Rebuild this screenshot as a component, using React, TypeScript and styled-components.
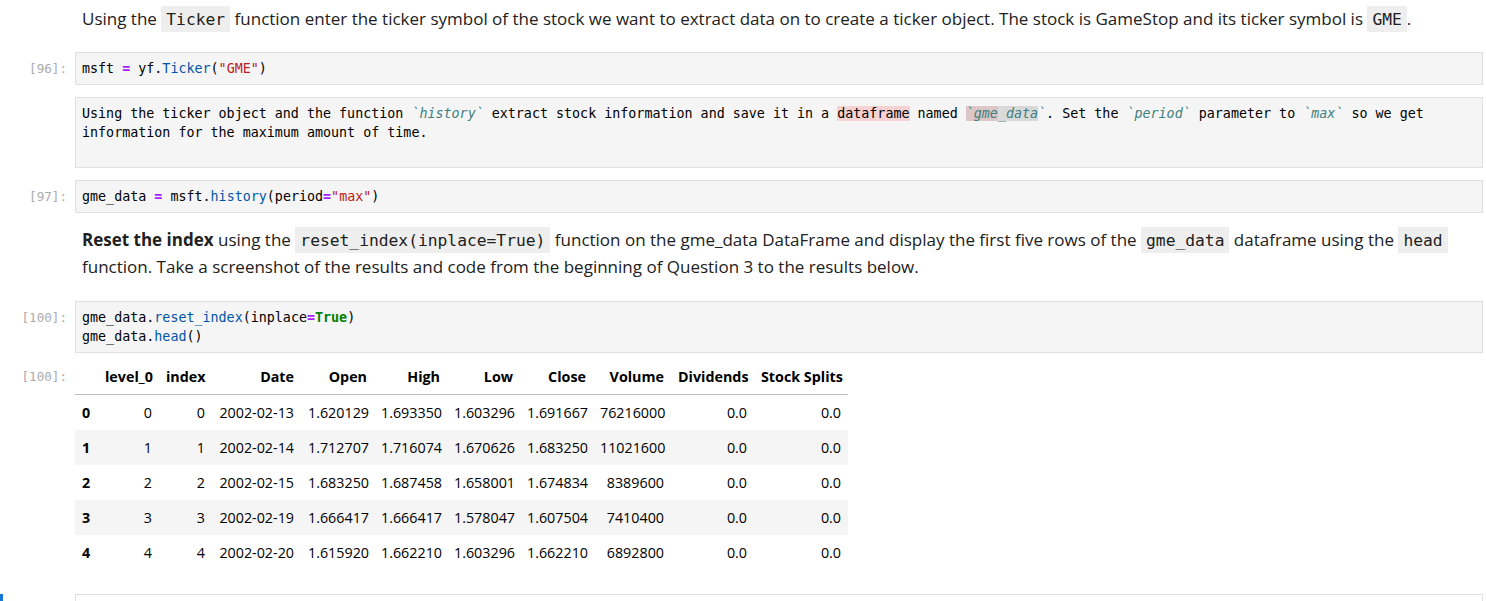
import React from "react";
import styled, { createGlobalStyle } from "styled-components";

const GlobalStyle = createGlobalStyle`
  html, body { margin: 0; padding: 0; background: #ffffff; }
  body { font-family: "Open Sans", "Noto Sans", sans-serif; color: #212121; }
`;

const Notebook = styled.div`
  display: flex;
  flex-direction: column;
  width: 1483px;
`;

const Cell = styled.div<{ $pt: number; $pb: number }>`
  display: flex;
  align-items: flex-start;
  padding: ${(p) => p.$pt}px 0 ${(p) => p.$pb}px;
`;

const Collapser = styled.div<{ $active?: boolean }>`
  width: 3px;
  align-self: stretch;
  flex: none;
  background: ${(p) => (p.$active ? "#1976d2" : "transparent")};
`;

const Prompt = styled.div<{ $top: number }>`
  width: 72px;
  flex: none;
  box-sizing: border-box;
  padding: ${(p) => p.$top}px 8px 0 0;
  text-align: right;
  font-family: "DejaVu Sans Mono", "Liberation Mono", monospace;
  font-size: 12.6px;
  line-height: 19px;
  color: #ababab;
`;

const Body = styled.div`
  flex: 1;
  min-width: 0;
`;

const Editor = styled.div<{ $white?: boolean }>`
  border: 1px solid #e0e0e0;
  background: ${(p) => (p.$white ? "#ffffff" : "#f5f5f5")};
  padding: 6px 6px;
  font-family: "DejaVu Sans Mono", "Liberation Mono", monospace;
  font-size: 13.35px;
  line-height: 19px;
  color: #000;
  white-space: pre;
`;

const Line = styled.div`
  height: 19px;
`;

const Tok = styled.span<{ $k: "op" | "str" | "prop" | "kw" }>`
  color: ${(p) =>
    p.$k === "op" ? "#aa22ff" : p.$k === "str" ? "#ba2121" : p.$k === "prop" ? "#0055aa" : "#008000"};
  font-weight: ${(p) => (p.$k === "op" || p.$k === "kw" ? 700 : 400)};
`;

const Tick = styled.span`
  color: #408080;
  font-style: italic;
`;

const Mark = styled.span<{ $tone: "spell" | "sel" | "mix" }>`
  background: ${(p) => (p.$tone === "spell" ? "#f6d2d2" : p.$tone === "mix" ? "#dcc6c6" : "#d9d9d9")};
`;

const Markdown = styled.div`
  padding: 0 7px;
  font-size: 17px;
  line-height: 27px;
  color: #212121;
`;

const Strong = styled.strong`
  font-weight: 700;
`;

const InlineCode = styled.code`
  font-family: "DejaVu Sans Mono", "Liberation Mono", monospace;
  font-size: 16.3px;
  line-height: 1;
  background: #eeeeee;
  padding: 4px 5px 3px;
  color: #212121;
`;

const Table = styled.table`
  border-collapse: collapse;
  table-layout: fixed;
  width: 773px;
  font-family: "Open Sans", "Noto Sans", sans-serif;
  font-size: 14.3px;
  line-height: 21px;
  color: #000;
`;

const Col = styled.col<{ $w: number }>`
  width: ${(p) => p.$w}px;
`;

const HeadCell = styled.th`
  padding: 7px 7px;
  text-align: right;
  font-weight: 700;
  white-space: nowrap;
  border-bottom: 1px solid #bdbdbd;
`;

const Row = styled.tr`
  &:nth-child(even) {
    background: #f5f5f5;
  }
`;

const RowHead = styled.th`
  padding: 7px 7px;
  text-align: left;
  font-weight: 700;
`;

const DataCell = styled.td`
  padding: 7px 7px;
  text-align: right;
  white-space: nowrap;
`;

const widths = [23, 61, 53, 89, 73, 73, 73, 73, 78, 83, 94];
const headers = ["", "level_0", "index", "Date", "Open", "High", "Low", "Close", "Volume", "Dividends", "Stock Splits"];
const rows = [
  ["0", "0", "0", "2002-02-13", "1.620129", "1.693350", "1.603296", "1.691667", "76216000", "0.0", "0.0"],
  ["1", "1", "1", "2002-02-14", "1.712707", "1.716074", "1.670626", "1.683250", "11021600", "0.0", "0.0"],
  ["2", "2", "2", "2002-02-15", "1.683250", "1.687458", "1.658001", "1.674834", "8389600", "0.0", "0.0"],
  ["3", "3", "3", "2002-02-19", "1.666417", "1.666417", "1.578047", "1.607504", "7410400", "0.0", "0.0"],
  ["4", "4", "4", "2002-02-20", "1.615920", "1.662210", "1.603296", "1.662210", "6892800", "0.0", "0.0"],
];

export default function App() {
  return (
    <>
      <GlobalStyle />
      <Notebook>
        <Cell $pt={5} $pb={14}>
          <Collapser />
          <Prompt $top={0} />
          <Body>
            <Markdown>
              Using the <InlineCode>Ticker</InlineCode> function enter the ticker symbol of the stock we want to
              extract data on to create a ticker object. The stock is GameStop and its ticker symbol is{" "}
              <InlineCode>GME</InlineCode>.
            </Markdown>
          </Body>
        </Cell>

        <Cell $pt={6} $pb={6}>
          <Collapser />
          <Prompt $top={7}>[96]:</Prompt>
          <Body>
            <Editor>
              <Line>
                msft <Tok $k="op">=</Tok> yf.<Tok $k="prop">Ticker</Tok>(<Tok $k="str">"GME"</Tok>)
              </Line>
            </Editor>
          </Body>
        </Cell>

        <Cell $pt={6} $pb={6}>
          <Collapser />
          <Prompt $top={7} />
          <Body>
            <Editor>
              <Line>
                Using the ticker object and the function <Tick>`history`</Tick> extract stock information and save it
                in a <Mark $tone="spell">dataframe</Mark> named{" "}
                <Tick>
                  <Mark $tone="mix">`gme</Mark>
                  <Mark $tone="sel">_data</Mark>`
                </Tick>
                . Set the <Tick>`period`</Tick> parameter to <Tick>`max`</Tick> so we get
              </Line>
              <Line>information for the maximum amount of time.</Line>
              <Line />
            </Editor>
          </Body>
        </Cell>

        <Cell $pt={6} $pb={6}>
          <Collapser />
          <Prompt $top={7}>[97]:</Prompt>
          <Body>
            <Editor>
              <Line>
                gme_data <Tok $k="op">=</Tok> msft.<Tok $k="prop">history</Tok>(period<Tok $k="op">=</Tok>
                <Tok $k="str">"max"</Tok>)
              </Line>
            </Editor>
          </Body>
        </Cell>

        <Cell $pt={7} $pb={15}>
          <Collapser />
          <Prompt $top={0} />
          <Body>
            <Markdown>
              <Strong>Reset the index</Strong> using the <InlineCode>reset_index(inplace=True)</InlineCode> function on
              the gme_data DataFrame and display the first five rows of the <InlineCode>gme_data</InlineCode> dataframe
              using the <InlineCode>head</InlineCode> function. Take a screenshot of the results and code from the
              beginning of Question 3 to the results below.
            </Markdown>
          </Body>
        </Cell>

        <Cell $pt={6} $pb={6}>
          <Collapser />
          <Prompt $top={7}>[100]:</Prompt>
          <Body>
            <Editor>
              <Line>
                gme_data.<Tok $k="prop">reset_index</Tok>(inplace<Tok $k="op">=</Tok>
                <Tok $k="kw">True</Tok>)
              </Line>
              <Line>
                gme_data.<Tok $k="prop">head</Tok>()
              </Line>
            </Editor>
          </Body>
        </Cell>

        <Cell $pt={0} $pb={18}>
          <Collapser />
          <Prompt $top={8}>[100]:</Prompt>
          <Body>
            <Table>
              <colgroup>
                {widths.map((w, i) => (
                  <Col key={i} $w={w} />
                ))}
              </colgroup>
              <thead>
                <tr>
                  {headers.map((h, i) => (
                    <HeadCell key={i}>{h}</HeadCell>
                  ))}
                </tr>
              </thead>
              <tbody>
                {rows.map((r) => (
                  <Row key={r[0]}>
                    <RowHead>{r[0]}</RowHead>
                    {r.slice(1).map((v, i) => (
                      <DataCell key={i}>{v}</DataCell>
                    ))}
                  </Row>
                ))}
              </tbody>
            </Table>
          </Body>
        </Cell>

        <Cell $pt={6} $pb={6}>
          <Collapser $active />
          <Prompt $top={7} />
          <Body>
            <Editor $white>
              <Line />
            </Editor>
          </Body>
        </Cell>
      </Notebook>
    </>
  );
}
